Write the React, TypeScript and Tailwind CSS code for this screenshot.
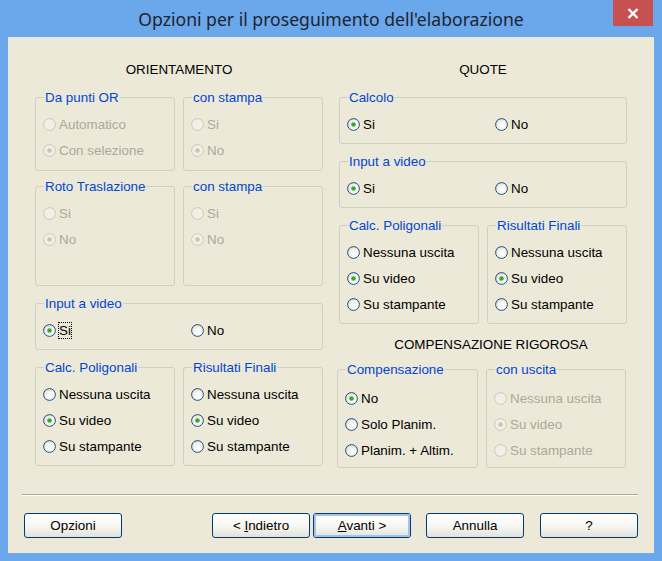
import React from 'react';

const FONT = { fontFamily: '"Liberation Sans", Arial, sans-serif' };

function Radio({ checked, disabled }: { checked?: boolean; disabled?: boolean }) {
  return (
    <svg width="13" height="13" viewBox="0 0 13 13" className="shrink-0">
      <defs>
        <radialGradient id="rfill" cx="0.6" cy="0.65" r="0.7">
          <stop offset="0" stopColor="#ffffff" />
          <stop offset="0.6" stopColor="#f3f2ec" />
          <stop offset="1" stopColor="#d7d4c6" />
        </radialGradient>
      </defs>
      <circle
        cx="6.5"
        cy="6.5"
        r="5.9"
        fill={disabled ? '#f2f0e6' : 'url(#rfill)'}
        stroke={disabled ? '#cac8bb' : '#1c5180'}
        strokeWidth="1"
      />
      {checked && (
        <circle cx="6.5" cy="6.5" r="2.3" fill={disabled ? '#c7c5b6' : '#2eac2e'} />
      )}
    </svg>
  );
}

function Option({
  label,
  checked,
  disabled,
  focus,
  className,
}: {
  label: string;
  checked?: boolean;
  disabled?: boolean;
  focus?: boolean;
  className?: string;
}) {
  return (
    <div className={`flex items-center h-[26px] gap-[3px] ${className ?? ''}`}>
      <Radio checked={checked} disabled={disabled} />
      <span
        className={`leading-[15px] ${disabled ? 'text-[#aca899]' : 'text-black'} ${
          focus ? 'outline outline-1 outline-dotted outline-black' : ''
        }`}
      >
        {label}
      </span>
    </div>
  );
}

function Group({
  title,
  className,
  children,
}: {
  title: string;
  className?: string;
  children: React.ReactNode;
}) {
  return (
    <div
      className={`relative border border-[#d0d0bf] rounded-[3px] pl-[7px] ${className ?? 'pt-[13px]'}`}
    >
      <span className="absolute left-[8px] top-[-8px] px-[1px] bg-[#ece9d8] text-[#0046d5] leading-[15px]">
        {title}
      </span>
      {children}
    </div>
  );
}

function Button({
  children,
  isDefault,
  className,
}: {
  children: React.ReactNode;
  isDefault?: boolean;
  className?: string;
}) {
  return (
    <div
      className={`w-[98px] h-[25px] rounded-[3px] border border-[#003c74] bg-gradient-to-b from-white via-[#f7f7f4] to-[#e3e2da] flex items-center justify-center ${className ?? ''}`}
    >
      <div
        className={`w-full h-full rounded-[2px] flex items-center justify-center ${
          isDefault ? 'border-2 border-[#a6c1ec]' : ''
        }`}
      >
        <span className="leading-[15px] text-black">{children}</span>
      </div>
    </div>
  );
}

export default function App() {
  return (
    <div
      className="w-[662px] h-[561px] bg-[#6aa7eb] flex flex-col text-[13.4px] overflow-hidden"
      style={FONT}
    >
      {/* Title bar */}
      <div className="relative h-[37px] flex items-center justify-center shrink-0">
        <span
          className="text-[17.6px] text-[#1e2430] leading-[22px]"
          style={{ fontFamily: '"Noto Sans", "Open Sans", sans-serif' }}
        >
          Opzioni per il proseguimento dell'elaborazione
        </span>
        <div className="absolute right-[9px] top-0 w-[40px] h-[26px] bg-[#c75050] flex items-center justify-center">
          <svg width="12" height="11" viewBox="0 0 12 11">
            <path d="M1.5 1 L10.5 10 M10.5 1 L1.5 10" stroke="#ffffff" strokeWidth="2.4" />
          </svg>
        </div>
      </div>

      {/* Client area */}
      <div className="mx-[8px] h-[516px] bg-[#ece9d8] flex flex-col">
        <div className="h-[431px] flex items-start pl-[27px]">
          {/* ORIENTAMENTO */}
          <div className="w-[288px] flex flex-col">
            <div className="mt-[25px] h-[16px] leading-[16px] text-center text-black">ORIENTAMENTO</div>
            <div className="mt-[19px] flex gap-[8px]">
              <Group title="Da punti OR" className="pt-[13px] w-[140px] h-[74px]">
                <Option label="Automatico" disabled />
                <Option label="Con selezione" checked disabled />
              </Group>
              <Group title="con stampa" className="pt-[13px] w-[140px] h-[74px]">
                <Option label="Si" disabled />
                <Option label="No" checked disabled />
              </Group>
            </div>
            <div className="mt-[15px] flex gap-[8px]">
              <Group title="Roto Traslazione" className="pt-[13px] w-[140px] h-[100px]">
                <Option label="Si" disabled />
                <Option label="No" checked disabled />
              </Group>
              <Group title="con stampa" className="pt-[13px] w-[140px] h-[100px]">
                <Option label="Si" disabled />
                <Option label="No" checked disabled />
              </Group>
            </div>
            <Group title="Input a video" className="pt-[13px] mt-[17px] h-[47px]">
              <div className="flex">
                <Option label="Si" checked focus className="w-[148px]" />
                <Option label="No" />
              </div>
            </Group>
            <div className="mt-[17px] flex gap-[8px]">
              <Group title="Calc. Poligonali" className="pt-[13px] w-[140px] h-[99px]">
                <Option label="Nessuna uscita" />
                <Option label="Su video" checked />
                <Option label="Su stampante" />
              </Group>
              <Group title="Risultati Finali" className="pt-[13px] w-[140px] h-[99px]">
                <Option label="Nessuna uscita" />
                <Option label="Su video" checked />
                <Option label="Su stampante" />
              </Group>
            </div>
          </div>

          {/* QUOTE */}
          <div className="ml-[16px] w-[288px] flex flex-col">
            <div className="mt-[25px] h-[16px] leading-[16px] text-center text-black">QUOTE</div>
            <Group title="Calcolo" className="pt-[13px] mt-[19px] h-[47px]">
              <div className="flex">
                <Option label="Si" checked className="w-[148px]" />
                <Option label="No" />
              </div>
            </Group>
            <Group title="Input a video" className="pt-[13px] mt-[17px] h-[47px]">
              <div className="flex">
                <Option label="Si" checked className="w-[148px]" />
                <Option label="No" />
              </div>
            </Group>
            <div className="mt-[17px] flex gap-[8px]">
              <Group title="Calc. Poligonali" className="pt-[13px] w-[140px] h-[99px]">
                <Option label="Nessuna uscita" />
                <Option label="Su video" checked />
                <Option label="Su stampante" />
              </Group>
              <Group title="Risultati Finali" className="pt-[13px] w-[140px] h-[99px]">
                <Option label="Nessuna uscita" />
                <Option label="Su video" checked />
                <Option label="Su stampante" />
              </Group>
            </div>
            <div className="mt-[13px] h-[16px] leading-[16px] text-center pl-[16px] text-black">
              COMPENSAZIONE RIGOROSA
            </div>
            <div className="mt-[16px] -ml-[2px] flex gap-[8px]">
              <Group title="Compensazione" className="pt-[15px] w-[141px] h-[99px]">
                <Option label="No" checked />
                <Option label="Solo Planim." />
                <Option label="Planim. + Altim." />
              </Group>
              <Group title="con uscita" className="pt-[15px] w-[140px] h-[99px]">
                <Option label="Nessuna uscita" disabled />
                <Option label="Su video" checked disabled />
                <Option label="Su stampante" disabled />
              </Group>
            </div>
          </div>
        </div>

        {/* Separator */}
        <div className="mt-[26px] ml-[14px] mr-[16px] border-t border-t-[#aca899] border-b border-b-white" />

        {/* Buttons */}
        <div className="mt-[17px] flex pl-[16px]">
          <Button>Opzioni</Button>
          <Button className="ml-[90px]">
            &lt; <u>I</u>ndietro
          </Button>
          <Button isDefault className="ml-[3px]">
            <u>A</u>vanti &gt;
          </Button>
          <Button className="ml-[15px]">Annulla</Button>
          <Button className="ml-[16px]">?</Button>
        </div>
      </div>
    </div>
  );
}
